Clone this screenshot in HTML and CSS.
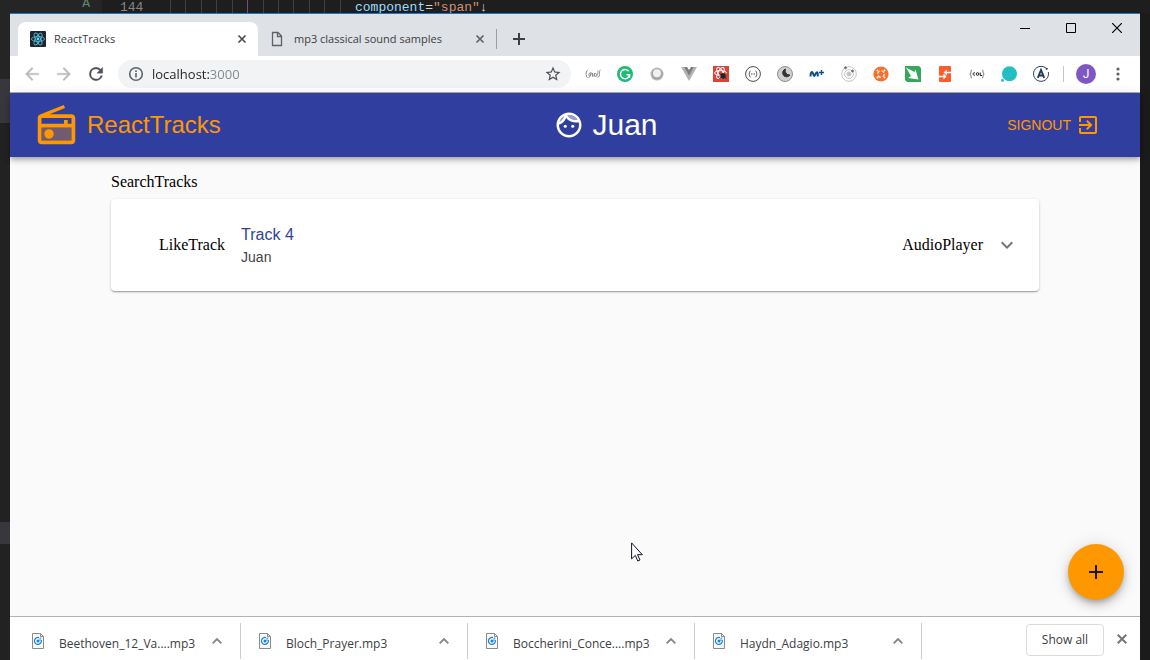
FILE: index.html
```html
<!DOCTYPE html>
<html lang="en">
<head>
<meta charset="utf-8">
<title>ReactTracks</title>
<link rel="stylesheet" href="styles.css">
</head>
<body>
<div class="desktop">
  <div class="editor-line">
    <span class="editor-side">A</span>
    <span class="editor-number">144</span>
    <span class="editor-guides"><i></i><i></i><i></i><i></i><i></i><i class="active"></i><i></i><i></i><i></i><i></i><i></i><i></i></span>
    <code class="editor-code"><span class="attr">component</span>=<span class="str">"span"</span><b>↓</b></code>
  </div>
  <div class="editor-left"></div>

  <div class="window">
    <div class="tab-strip">
      <div class="tab tab-active">
        <svg class="favicon" width="16" height="16" viewBox="0 0 16 16"><rect width="16" height="16" rx="1" fill="#20232a"/><g fill="none" stroke="#4fb8d6" stroke-width=".9"><ellipse cx="8" cy="8" rx="6.600" ry="2.500"/><ellipse cx="8" cy="8" rx="6.600" ry="2.500" transform="rotate(60 8 8)"/><ellipse cx="8" cy="8" rx="6.600" ry="2.500" transform="rotate(120 8 8)"/></g><circle cx="8" cy="8" r="1.400" fill="#61dafb"/></svg>
        <span class="tab-title">ReactTracks</span>
        <button class="tab-close" aria-label="Close tab"><svg width="10" height="10" viewBox="0 0 10 10"><path d="M1.500 1.500l7 7M8.500 1.500l-7 7" stroke="#4a4d51" stroke-width="1.700"/></svg></button>
      </div>
      <div class="tab">
        <svg class="favicon" width="16" height="16" viewBox="0 0 16 16"><path d="M2.500 1.500h5.500l3.500 3.500v9.500h-9zM7.500 1.500v4h4" fill="none" stroke="#5f6368" stroke-width="1.300"/></svg>
        <span class="tab-title">mp3 classical sound samples</span>
        <button class="tab-close" aria-label="Close tab"><svg width="10" height="10" viewBox="0 0 10 10"><path d="M1.500 1.500l7 7M8.500 1.500l-7 7" stroke="#5f6368" stroke-width="1.700"/></svg></button>
      </div>
      <button class="new-tab" aria-label="New tab"><svg width="12" height="12" viewBox="0 0 12 12"><path d="M6 0v12M0 6h12" stroke="#3c4043" stroke-width="2"/></svg></button>
      <div class="window-controls">
        <button aria-label="Minimize"><svg width="10" height="10" viewBox="0 0 10 10"><path d="M0 5.500h10" stroke="#000"/></svg></button>
        <button aria-label="Maximize"><svg width="10" height="10" viewBox="0 0 10 10"><path d="M.5.500h9v9h-9z" fill="none" stroke="#000"/></svg></button>
        <button aria-label="Close"><svg width="10" height="10" viewBox="0 0 10 10"><path d="M0 0l10 10M10 0L0 10" stroke="#000" stroke-width="1.200"/></svg></button>
      </div>
    </div>

    <div class="toolbar">
      <button class="tool" aria-label="Back"><svg width="20" height="20" viewBox="0 0 24 24" fill="#babcbe" stroke="#babcbe" stroke-width=".4"><path d="M20 11H7.800l5.600-5.600L12 4l-8 8 8 8 1.400-1.400L7.800 13H20z"/></svg></button>
      <button class="tool" aria-label="Forward"><svg width="20" height="20" viewBox="0 0 24 24" fill="#babcbe" stroke="#babcbe" stroke-width=".4"><path d="M4 11h12.200l-5.600-5.600L12 4l8 8-8 8-1.400-1.400 5.600-5.600H4z"/></svg></button>
      <button class="tool" aria-label="Reload"><svg width="20" height="20" viewBox="0 0 24 24" fill="#4d5054" stroke="#4d5054" stroke-width=".4"><path d="M17.650 6.350A7.960 7.960 0 0 0 12 4a8 8 0 1 0 7.730 10h-2.080A6 6 0 1 1 12 6c1.660 0 3.140.69 4.220 1.780L13 11h7V4z"/></svg></button>
      <div class="omnibox">
        <svg width="16" height="16" viewBox="0 0 16 16" fill="none" stroke="#5f6368" stroke-width="1.600"><circle cx="8" cy="8" r="6.300"/><path d="M8 7v4.500M8 4.200v1.700"/></svg>
        <input class="address" type="text" aria-label="Address" value="localhost:3000">
        <button class="star" aria-label="Bookmark this page"><svg width="18" height="18" viewBox="0 0 24 24" fill="#4d5054"><path d="M22 9.240l-7.190-.62L12 2 9.190 8.630 2 9.240l5.460 4.730L5.820 21 12 17.270 18.180 21l-1.630-7.030L22 9.240zM12 15.400l-3.760 2.270 1-4.280-3.320-2.880 4.380-.38L12 6.100l1.710 4.040 4.380.38-3.320 2.880 1 4.280L12 15.400z"/></svg></button>
      </div>
      <div class="extensions">
        <button class="tool" aria-label="GraphQL brackets"><svg width="16" height="16" viewBox="0 0 16 16" fill="none" stroke="#8c8c8c" stroke-width="1"><path d="M2.500 4.500c-1.500 0-.5 3-1.800 3.500 1.300.5.300 3.500 1.800 3.500M15.500 4c-1.500 0-.5 3-1.300 4 .8.500-.2 3.500-1.700 3.500M5.500 6.500c-2 .5-2 4-.5 3.500s1-3.500 1-3.500-.3 5-2.500 5M7.500 7v3.500c1.500 0 2-2 2-3.500v3.500M10.500 7c1.500 2 1 3 0 3.500 2 .5 2.300-3.500 2.500-6"/></svg></button>
        <button class="tool" aria-label="Grammar checker"><svg width="16" height="16" viewBox="0 0 16 16"><circle cx="8" cy="8" r="8" fill="#1fb978"/><path d="M11.600 5.200A4.600 4.600 0 1 0 12.600 8.800H9.500M12.500 8.500v3.200" fill="none" stroke="#fff" stroke-width="1.500"/></svg></button>
        <button class="tool" aria-label="Sphere"><svg width="16" height="16" viewBox="0 0 16 16"><circle cx="8" cy="8" r="6.300" fill="#a5a5a5"/><circle cx="8" cy="8" r="6.100" fill="none" stroke="#c7c7c7" stroke-width=".8"/><circle cx="8" cy="7.200" r="4" fill="#f0f0f0"/></svg></button>
        <button class="tool" aria-label="Vue devtools"><svg width="16" height="16" viewBox="0 0 16 16"><path d="M0 1h16L8 15z" fill="#b3b3b3"/><path d="M3.200 1h9.600L8 9.500z" fill="#7d7d7d"/><path d="M6 1h4L8 4z" fill="#fff"/></svg></button>
        <button class="tool" aria-label="React developer tools"><svg width="16" height="16" viewBox="0 0 16 16"><path d="M0 0h16v16H0z" fill="#db4437"/><g fill="none" stroke="#fff"><ellipse cx="7.500" cy="7" rx="6" ry="2.400"/><ellipse cx="7.500" cy="7" rx="6" ry="2.400" transform="rotate(60 7.500 7)"/><ellipse cx="7.500" cy="7" rx="6" ry="2.400" transform="rotate(120 7.500 7)"/></g><ellipse cx="10" cy="10" rx="2.300" ry="3" fill="#222"/><path d="M6.500 7.500l7 5M13.500 7.500l-7 5M6.500 10h7" stroke="#222"/></svg></button>
        <button class="tool" aria-label="Code braces"><svg width="16" height="16" viewBox="0 0 16 16" fill="none" stroke="#4b4b4b"><circle cx="8" cy="8" r="7.400"/><path d="M5.500 5c-1.400 0-.5 2.500-1.700 3 1.200.5.300 3 1.700 3M10.500 5c1.400 0 .5 2.500 1.700 3-1.200.5-.3 3-1.700 3"/><path d="M6 8h4" stroke-dasharray="1 .5"/></svg></button>
        <button class="tool" aria-label="Dark mode"><svg width="16" height="16" viewBox="0 0 16 16"><circle cx="8" cy="8" r="7.500" fill="#cfcfcf" stroke="#909090"/><path d="M8.500 3a4 4 0 1 0 4.500 6 4.300 4.300 0 0 1-4.500-6z" fill="#333" stroke="#333"/></svg></button>
        <button class="tool" aria-label="Movistar"><svg width="16" height="16" viewBox="0 0 16 16" fill="none"><path d="M1.500 10.500C1.500 6.500 3 4.500 4 7.500S5 11 6.500 8s2.700-2 2.200 2.500" stroke="#0b5279" stroke-width="2"/><path d="M12.500 4v5M10 6.500h5" stroke="#164a88" stroke-width="1.400"/></svg></button>
        <button class="tool" aria-label="Orbit"><svg width="16" height="16" viewBox="0 0 16 16" fill="none" stroke="#c4c4c4"><circle cx="8" cy="8" r="7.300"/><circle cx="8" cy="8" r="4.400"/><circle cx="8" cy="8" r="2" fill="#c4c4c4"/><circle cx="4.500" cy="1.800" r="1" fill="#666" stroke="#777"/><circle cx="11.500" cy="5" r="1" fill="#666" stroke="#777"/></svg></button>
        <button class="tool" aria-label="Orange hub"><svg width="16" height="16" viewBox="0 0 16 16"><circle cx="8" cy="8" r="7.600" fill="#f7702c"/><circle cx="8" cy="8" r="3.300" fill="none" stroke="#fff" stroke-width="1.200" stroke-dasharray="3.200 2"/><path d="M4 4l1 1M12 4l-1 1M4 12l1-1M12 12l-1-1" stroke="#fff" stroke-width="1.800"/></svg></button>
        <button class="tool" aria-label="Green arrow"><svg width="16" height="16" viewBox="0 0 16 16"><path d="M0 0h14l2 2v14H2l-2-2z" fill="#35a65a"/><path d="M1 1.500l8.500 4.500 1-2.500 3 10-10.500-1.500L6 10z" fill="#fff"/></svg></button>
        <button class="tool" aria-label="Orange switch"><svg width="16" height="16" viewBox="0 0 16 16"><rect x="2" y="0" width="12" height="16" rx="1" fill="#ff5a2b"/><path d="M14 6.500H8.500M2 10.500h6" fill="none" stroke="#fff" stroke-width="1.500"/><path d="M6.500 6.500L10 3.500v6zM9.500 10.500L6.500 7.500v6z" fill="#fff"/></svg></button>
        <button class="tool" aria-label="CQL"><svg width="16" height="16" viewBox="0 0 16 16" fill="none" stroke="#555"><path d="M3 4C1 4 3 7 .8 8 3 9 1 12 3 12M13 4c2 0 0 3 2.200 4C13 9 15 12 13 12" stroke-width=".8"/><path d="M6 7c-2.500-1.500-2.500 3.500 0 2M11.200 6.500v3h1.800" stroke="#222"/><circle cx="8.500" cy="8" r="1.300" stroke="#222"/></svg></button>
        <button class="tool" aria-label="Chat bubble"><svg width="16" height="16" viewBox="0 0 16 16" fill="#22bfc1"><circle cx="8.500" cy="7.700" r="7.500"/><circle cx="1.500" cy="14.300" r="1.500"/></svg></button>
        <button class="tool" aria-label="Apollo client"><svg width="16" height="16" viewBox="0 0 16 16" fill="none" stroke="#233b5d"><path d="M13.600 2.800A7.500 7.500 0 1 0 15.300 6"/><circle cx="13.800" cy="2.800" r=".6" fill="#233b5d"/><path d="M4.800 11.800L8 4l3.200 7.800M6.500 9.500h3.700" stroke-width="1.900"/></svg></button>
      </div>
      <div class="tool-divider"></div>
      <button class="tool" aria-label="Profile"><span class="avatar">J</span></button>
      <button class="tool" aria-label="Menu"><svg width="4" height="14" viewBox="0 0 4 14" fill="#5f6368"><circle cx="2" cy="2" r="1.600"/><circle cx="2" cy="7" r="1.600"/><circle cx="2" cy="12" r="1.600"/></svg></button>
    </div>

    <header class="app-bar">
      <a class="brand" href="#">
        <svg width="45" height="45" viewBox="0 0 24 24" fill="currentColor"><path d="M4 13h16v7H4z" opacity=".32"/><path d="M2 20c0 1.100.9 2 2 2h16c1.100 0 2-.9 2-2V8c0-1.110-.9-2-2-2H8.300l8.260-3.340L15.880 1 3.240 6.150C2.510 6.430 2 7.170 2 8v12zM4 8h16v3h-2V9h-2v2H4V8zm0 5h16v7H4v-7z"/><circle cx="8" cy="16.500" r="2.500"/></svg>
        <span>ReactTracks</span>
      </a>
      <a class="user" href="#">
        <svg width="30" height="30" viewBox="0 0 24 24" fill="currentColor"><path d="M17.500 8c.46 0 .91-.05 1.340-.12C17.440 5.560 14.900 4 12 4c-.46 0-.91.05-1.340.12C12.060 6.440 14.600 8 17.500 8zM8.080 5.030C6.370 6 5.050 7.580 4.420 9.470c1.710-.97 3.030-2.550 3.660-4.440z" opacity=".5"/><path d="M12 2C6.480 2 2 6.480 2 12s4.480 10 10 10 10-4.480 10-10S17.520 2 12 2zm0 2c2.900 0 5.440 1.560 6.840 3.880-.43.070-.88.120-1.340.12-2.900 0-5.440-1.560-6.840-3.880.43-.07.88-.12 1.340-.12zM8.080 5.030C7.450 6.920 6.130 8.500 4.420 9.470 5.050 7.580 6.370 6 8.080 5.030zM12 20c-4.410 0-8-3.590-8-8 0-.05.010-.1.010-.15 2.600-.98 4.680-2.990 5.740-5.550 1.830 2.260 4.620 3.700 7.750 3.700.75 0 1.470-.09 2.170-.24.21.71.33 1.460.33 2.240 0 4.410-3.590 8-8 8z"/><circle cx="9" cy="13" r="1.250"/><circle cx="15" cy="13" r="1.250"/></svg>
        <span>Juan</span>
      </a>
      <button class="signout">
        <span>SIGNOUT</span>
        <svg width="24" height="24" viewBox="0 0 24 24" fill="currentColor"><path d="M10.090 15.590L11.500 17l5-5-5-5-1.410 1.410L12.670 11H3v2h9.670l-2.580 2.590zM19 3H5c-1.110 0-2 .9-2 2v4h2V5h14v14H5v-4H3v4c0 1.100.89 2 2 2h14c1.100 0 2-.9 2-2V5c0-1.100-.9-2-2-2z"/></svg>
      </button>
    </header>

    <main class="page">
      <div class="content">
        <div class="search-tracks">SearchTracks</div>
        <section class="track">
          <span class="like">LikeTrack</span>
          <div class="track-text">
            <div class="track-title">Track 4</div>
            <a class="track-user" href="#">Juan</a>
          </div>
          <span class="player">AudioPlayer</span>
          <button class="expand" aria-label="Expand"><svg width="24" height="24" viewBox="0 0 24 24" fill="#757575"><path d="M16.590 8.590L12 13.170 7.410 8.590 6 10l6 6 6-6z"/></svg></button>
        </section>
      </div>
      <button class="fab" aria-label="Add track"><svg width="24" height="24" viewBox="0 0 24 24" fill="#21160a"><path d="M19 13h-6v6h-2v-6H5v-2h6V5h2v6h6z"/></svg></button>
      <svg class="pointer" width="12" height="20" viewBox="0 0 12 20"><path d="M.6.900v16l3.700-3.500 2.500 5.600 2.200-1-2.500-5.300h4.800z" fill="#fff" stroke="#11131f"/></svg>
    </main>

    <footer class="downloads">
      <button class="download"><svg width="12" height="16" viewBox="0 0 12 16"><path d="M.5.500h8l3 3v12H.5z" fill="#fafafa" stroke="#8a8a8a"/><path d="M8.500.500v3h3" fill="none" stroke="#8a8a8a"/><path d="M7 4.600A3.500 3.500 0 1 0 9.300 7" fill="none" stroke="#1683d8" stroke-width="1.200"/><circle cx="6" cy="8" r="1.500" fill="#1683d8"/><path d="M8 8V5h1.500" fill="none" stroke="#1683d8" stroke-width=".8"/></svg><span>Beethoven_12_Va....mp3</span><svg width="10" height="6" viewBox="0 0 10 6"><path d="M.7 5.300L5 1l4.300 4.300" fill="none" stroke="#80868b" stroke-width="1.800"/></svg></button>
      <button class="download"><svg width="12" height="16" viewBox="0 0 12 16"><path d="M.5.500h8l3 3v12H.5z" fill="#fafafa" stroke="#8a8a8a"/><path d="M8.500.500v3h3" fill="none" stroke="#8a8a8a"/><path d="M7 4.600A3.500 3.500 0 1 0 9.300 7" fill="none" stroke="#1683d8" stroke-width="1.200"/><circle cx="6" cy="8" r="1.500" fill="#1683d8"/><path d="M8 8V5h1.500" fill="none" stroke="#1683d8" stroke-width=".8"/></svg><span>Bloch_Prayer.mp3</span><svg width="10" height="6" viewBox="0 0 10 6"><path d="M.7 5.300L5 1l4.300 4.300" fill="none" stroke="#80868b" stroke-width="1.800"/></svg></button>
      <button class="download"><svg width="12" height="16" viewBox="0 0 12 16"><path d="M.5.500h8l3 3v12H.5z" fill="#fafafa" stroke="#8a8a8a"/><path d="M8.500.500v3h3" fill="none" stroke="#8a8a8a"/><path d="M7 4.600A3.500 3.500 0 1 0 9.300 7" fill="none" stroke="#1683d8" stroke-width="1.200"/><circle cx="6" cy="8" r="1.500" fill="#1683d8"/><path d="M8 8V5h1.500" fill="none" stroke="#1683d8" stroke-width=".8"/></svg><span>Boccherini_Conce....mp3</span><svg width="10" height="6" viewBox="0 0 10 6"><path d="M.7 5.300L5 1l4.300 4.300" fill="none" stroke="#80868b" stroke-width="1.800"/></svg></button>
      <button class="download"><svg width="12" height="16" viewBox="0 0 12 16"><path d="M.5.500h8l3 3v12H.5z" fill="#fafafa" stroke="#8a8a8a"/><path d="M8.500.500v3h3" fill="none" stroke="#8a8a8a"/><path d="M7 4.600A3.500 3.500 0 1 0 9.300 7" fill="none" stroke="#1683d8" stroke-width="1.200"/><circle cx="6" cy="8" r="1.500" fill="#1683d8"/><path d="M8 8V5h1.500" fill="none" stroke="#1683d8" stroke-width=".8"/></svg><span>Haydn_Adagio.mp3</span><svg width="10" height="6" viewBox="0 0 10 6"><path d="M.7 5.300L5 1l4.300 4.300" fill="none" stroke="#80868b" stroke-width="1.800"/></svg></button>
      <button class="show-all">Show all</button>
      <button class="close-downloads" aria-label="Close downloads"><svg width="10" height="10" viewBox="0 0 10 10"><path d="M.7.700l8.600 8.600M9.300.700L.7 9.300" stroke="#73777b" stroke-width="2"/></svg></button>
    </footer>
  </div>

  <div class="editor-right"></div>
</div>
</body>
</html>
```
FILE: styles.css
```css
* {
  box-sizing: border-box;
}

body {
  margin: 0;
  background: #1e1e1e;
}

button {
  border: 0;
  padding: 0;
  background: none;
  font: inherit;
  color: inherit;
}

a {
  color: inherit;
  text-decoration: none;
}

svg {
  display: block;
  flex: none;
}

.desktop {
  display: grid;
  grid-template-columns: 10px minmax(0, 1fr) 10px;
  grid-template-rows: 13px 1fr;
  min-height: 100vh;
}

/* Editor behind the browser window */
.editor-line {
  grid-column: 1 / -1;
  display: flex;
  height: 13px;
  background: linear-gradient(90deg, #252526 102px, #1e1e1e 102px);
  font: 13px/16px "Liberation Mono", monospace;
  color: #d4d4d4;
}

.editor-side {
  width: 102px;
  padding-right: 12px;
  text-align: right;
  line-height: 8px;
  color: #5f8a6d;
}

.editor-number {
  width: 68px;
  padding-left: 18px;
  color: #858585;
}

.editor-guides {
  display: grid;
  grid-template-columns: repeat(12, 1fr);
  width: 185px;
}

.editor-guides i {
  border-left: 1px solid #404040;
}

.editor-guides .active {
  border-color: #7d4a80;
}

.editor-code {
  font: inherit;
}

.attr {
  color: #9cdcfe;
}

.str {
  color: #ce9178;
}

.editor-left {
  background: linear-gradient(#252526 66px, #37373d 66px, #37373d 110px, #222223 110px, #222223 509px, #37373d 509px, #37373d 531px, #222223 531px);
}

.editor-right {
  background: #1b1b1b;
}

/* Browser window */
.window {
  position: relative;
  display: flex;
  flex-direction: column;
  border-top: 1px solid #1a78c2;
  background: #fff;
  font: 12px/16px "Open Sans", sans-serif;
  color: #3c4043;
}

.tab-strip {
  display: flex;
  align-items: flex-end;
  height: 42px;
  padding-left: 8px;
  background: #dee1e6;
}

.tab {
  display: flex;
  align-items: center;
  gap: 8px;
  width: 238px;
  height: 34px;
  padding: 0 10px 0 12px;
}

.tab-active {
  width: 240px;
  border-radius: 8px 8px 0 0;
  background: #fff;
}

.tab-title {
  flex: 1;
  font-size: 11px;
  white-space: nowrap;
}

.tab-close {
  display: grid;
  place-items: center;
  width: 12px;
  height: 16px;
}

.new-tab {
  display: grid;
  place-items: center;
  width: 44px;
  height: 20px;
  margin-bottom: 7px;
  border-left: 1px solid #9a9da2;
}

.window-controls {
  display: flex;
  align-self: flex-start;
  margin-left: auto;
}

.window-controls button {
  display: grid;
  place-items: center;
  width: 46px;
  height: 28px;
}

.toolbar {
  display: flex;
  align-items: center;
  gap: 4px;
  height: 37px;
  padding: 0 8px;
  border-bottom: 1px solid #b0b0b3;
}

.tool {
  display: grid;
  place-items: center;
  flex: none;
  width: 28px;
  height: 28px;
}

.omnibox {
  display: flex;
  flex: 1;
  align-items: center;
  gap: 8px;
  height: 28px;
  margin: 0 4px;
  padding: 0 9px 0 10px;
  border-radius: 14px;
  background: #f1f3f4;
}

.address {
  flex: 1;
  min-width: 0;
  padding: 0;
  border: 0;
  outline: 0;
  background: linear-gradient(90deg, #202124 57px, #80868b 57px);
  background-clip: text;
  -webkit-background-clip: text;
  font: 13px/20px "Open Sans", sans-serif;
  color: transparent;
}

.extensions {
  display: flex;
  gap: 4px;
}

.tool-divider {
  width: 1px;
  height: 16px;
  margin: 0 4px;
  background: #c4c7ca;
}

.avatar {
  width: 20px;
  border-radius: 50%;
  background: #7e57c2;
  font: 12px/20px Roboto, sans-serif;
  color: #fff;
}

/* Application */
.app-bar {
  position: relative;
  z-index: 1;
  display: flex;
  align-items: center;
  justify-content: space-between;
  height: 64px;
  padding: 0 32px 0 24px;
  background: #303f9f;
  box-shadow: 0 2px 4px -1px rgba(0, 0, 0, .2), 0 4px 5px rgba(0, 0, 0, .14), 0 1px 10px rgba(0, 0, 0, .12);
  font-family: "Liberation Sans", Arial, sans-serif;
  color: #ff9800;
}

.brand,
.user,
.signout {
  display: flex;
  align-items: center;
  gap: 8px;
}

.brand {
  font-size: 24px;
  line-height: 32px;
}

.user {
  font-size: 30px;
  line-height: 40px;
  color: #fff;
}

.signout {
  gap: 5px;
  padding: 6px 8px 6px 16px;
  font-size: 14px;
  line-height: 24px;
}

.page {
  position: relative;
  flex: 1;
  padding: 16px 24px;
  background: #fafafa;
  font: 16px/18px "Liberation Serif", "Times New Roman", serif;
  color: #000;
}

.content {
  max-width: 928px;
  margin: 0 auto;
}

.search-tracks {
  margin-bottom: 8px;
}

.track {
  display: flex;
  align-items: center;
  min-height: 92px;
  padding: 0 20px 0 48px;
  border-radius: 4px;
  background: #fff;
  box-shadow: 0 1px 3px rgba(0, 0, 0, .2), 0 1px 1px rgba(0, 0, 0, .14), 0 2px 1px -1px rgba(0, 0, 0, .12);
}

.track-text {
  flex: 1;
  margin-left: 16px;
  font-family: "Liberation Sans", Arial, sans-serif;
}

.track-title {
  line-height: 24px;
  color: #303f9f;
}

.track-user {
  display: block;
  font-size: 14px;
  line-height: 20px;
  color: #444;
}

.expand {
  margin-left: 12px;
}

.fab {
  position: absolute;
  right: 16px;
  bottom: 16px;
  display: grid;
  place-items: center;
  width: 56px;
  height: 56px;
  border-radius: 50%;
  background: #ff9800;
  box-shadow: 0 3px 5px -1px rgba(0, 0, 0, .2), 0 6px 10px rgba(0, 0, 0, .14), 0 1px 18px rgba(0, 0, 0, .12);
}

.pointer {
  position: absolute;
  left: 621px;
  top: 385px;
}

/* Downloads bar */
.downloads {
  display: flex;
  align-items: center;
  min-height: 44px;
  padding: 0 13px 0 4px;
  border-top: 1px solid #b3b3b3;
}

.download {
  display: flex;
  align-items: center;
  gap: 15px;
  width: 227px;
  height: 36px;
  margin-top: 4px;
  padding: 0 18px;
  border-right: 1px solid #ccc;
  text-align: left;
}

.download span {
  flex: 1;
  padding-top: 6px;
  white-space: nowrap;
}

.show-all {
  width: 78px;
  height: 32px;
  margin: 2px 13px 0 auto;
  border: 1px solid #dadce0;
  border-radius: 4px;
}
```
